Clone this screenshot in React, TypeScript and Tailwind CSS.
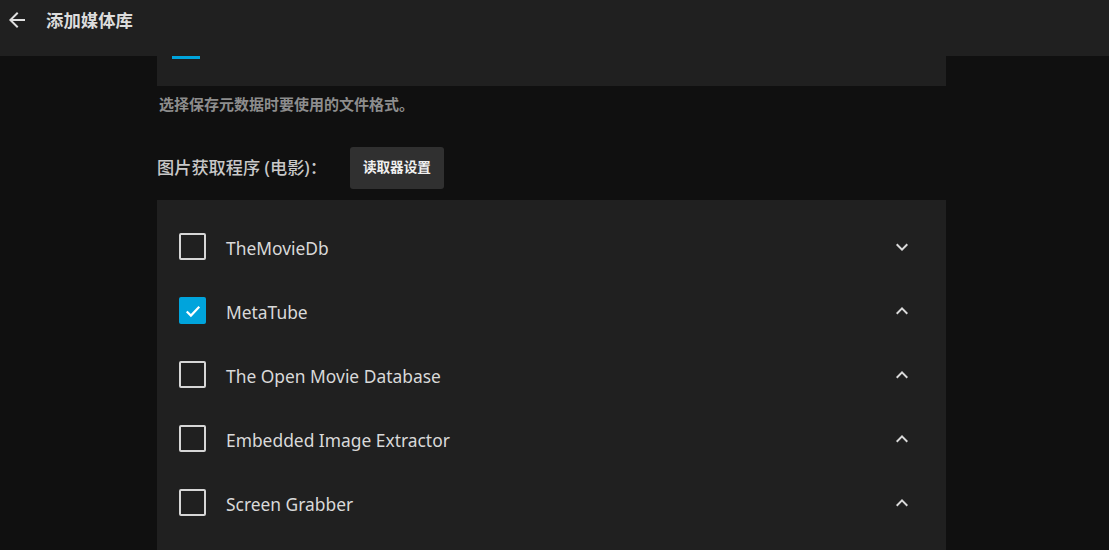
import React from "react";

const font = { fontFamily: '"Noto Sans", "Noto Sans CJK SC", sans-serif' };

function Chevron({ up }: { up?: boolean }) {
  return (
    <svg width="24" height="24" viewBox="0 0 24 24" className="text-[#dadada]">
      <path
        d={up ? "M7.41 15.41 12 10.83l4.59 4.58L18 14l-6-6-6 6z" : "M7.41 8.59 12 13.17l4.59-4.58L18 10l-6 6-6-6z"}
        fill="currentColor"
      />
    </svg>
  );
}

function Row({ label, checked, up }: { label: string; checked?: boolean; up?: boolean }) {
  return (
    <div className="flex items-center h-[64px] pl-[22px] pr-[32px]">
      {checked ? (
        <div className="w-[27px] h-[27px] rounded-[2px] bg-[#00a4dc] flex items-center justify-center">
          <svg width="20" height="20" viewBox="0 0 24 24">
            <path d="M4.5 12.5l5 5L19.5 7" stroke="white" strokeWidth="2.6" fill="none" />
          </svg>
        </div>
      ) : (
        <div className="w-[27px] h-[27px] rounded-[2px] border-2 border-[#d6d6d6]" />
      )}
      <div className="ml-[20px] text-[17.4px] text-[#d9d9d9] flex-1 pt-[4px]">{label}</div>
      <Chevron up={up} />
    </div>
  );
}

export default function App() {
  return (
    <div style={font} className="w-[1109px] h-[550px] overflow-hidden bg-[#101010] flex flex-col">
      <div className="h-[56px] bg-[#202020] shrink-0">
        <div className="h-[40px] flex items-center">
          <svg width="24" height="24" viewBox="0 0 24 24" className="ml-[5px] text-[#e0e0e0]">
            <path d="M20 11H7.83l5.59-5.59L12 4l-8 8 8 8 1.41-1.41L7.83 13H20v-2z" fill="currentColor" />
          </svg>
          <div className="ml-[17px] text-[17.4px] font-semibold text-[#dcdcdc]">添加媒体库</div>
        </div>
      </div>
      <div className="w-[789px] ml-[157px] flex flex-col">
        <div className="h-[30px] bg-[#202020] relative">
          <div className="absolute left-[15px] top-0 w-[28px] h-[3px] bg-[#00a4dc]" />
        </div>
        <div className="mt-[7px] pl-[2px] text-[15px] font-semibold text-[#8d8d8d]">选择保存元数据时要使用的文件格式。</div>
        <div className="mt-[31px] flex items-center">
          <div className="text-[17.2px] font-medium text-[#c8c8c8]">图片获取程序 (电影)：</div>
          <div className="ml-[23px] h-[42px] w-[94px] rounded-[3px] bg-[#303030] flex items-center justify-center text-[13.6px] font-bold text-[#f0f0f0]">
            读取器设置
          </div>
        </div>
        <div className="mt-[11px] bg-[#202020] pt-[15px] h-[400px]">
          <Row label="TheMovieDb" />
          <Row label="MetaTube" checked up />
          <Row label="The Open Movie Database" up />
          <Row label="Embedded Image Extractor" up />
          <Row label="Screen Grabber" up />
        </div>
      </div>
    </div>
  );
}
